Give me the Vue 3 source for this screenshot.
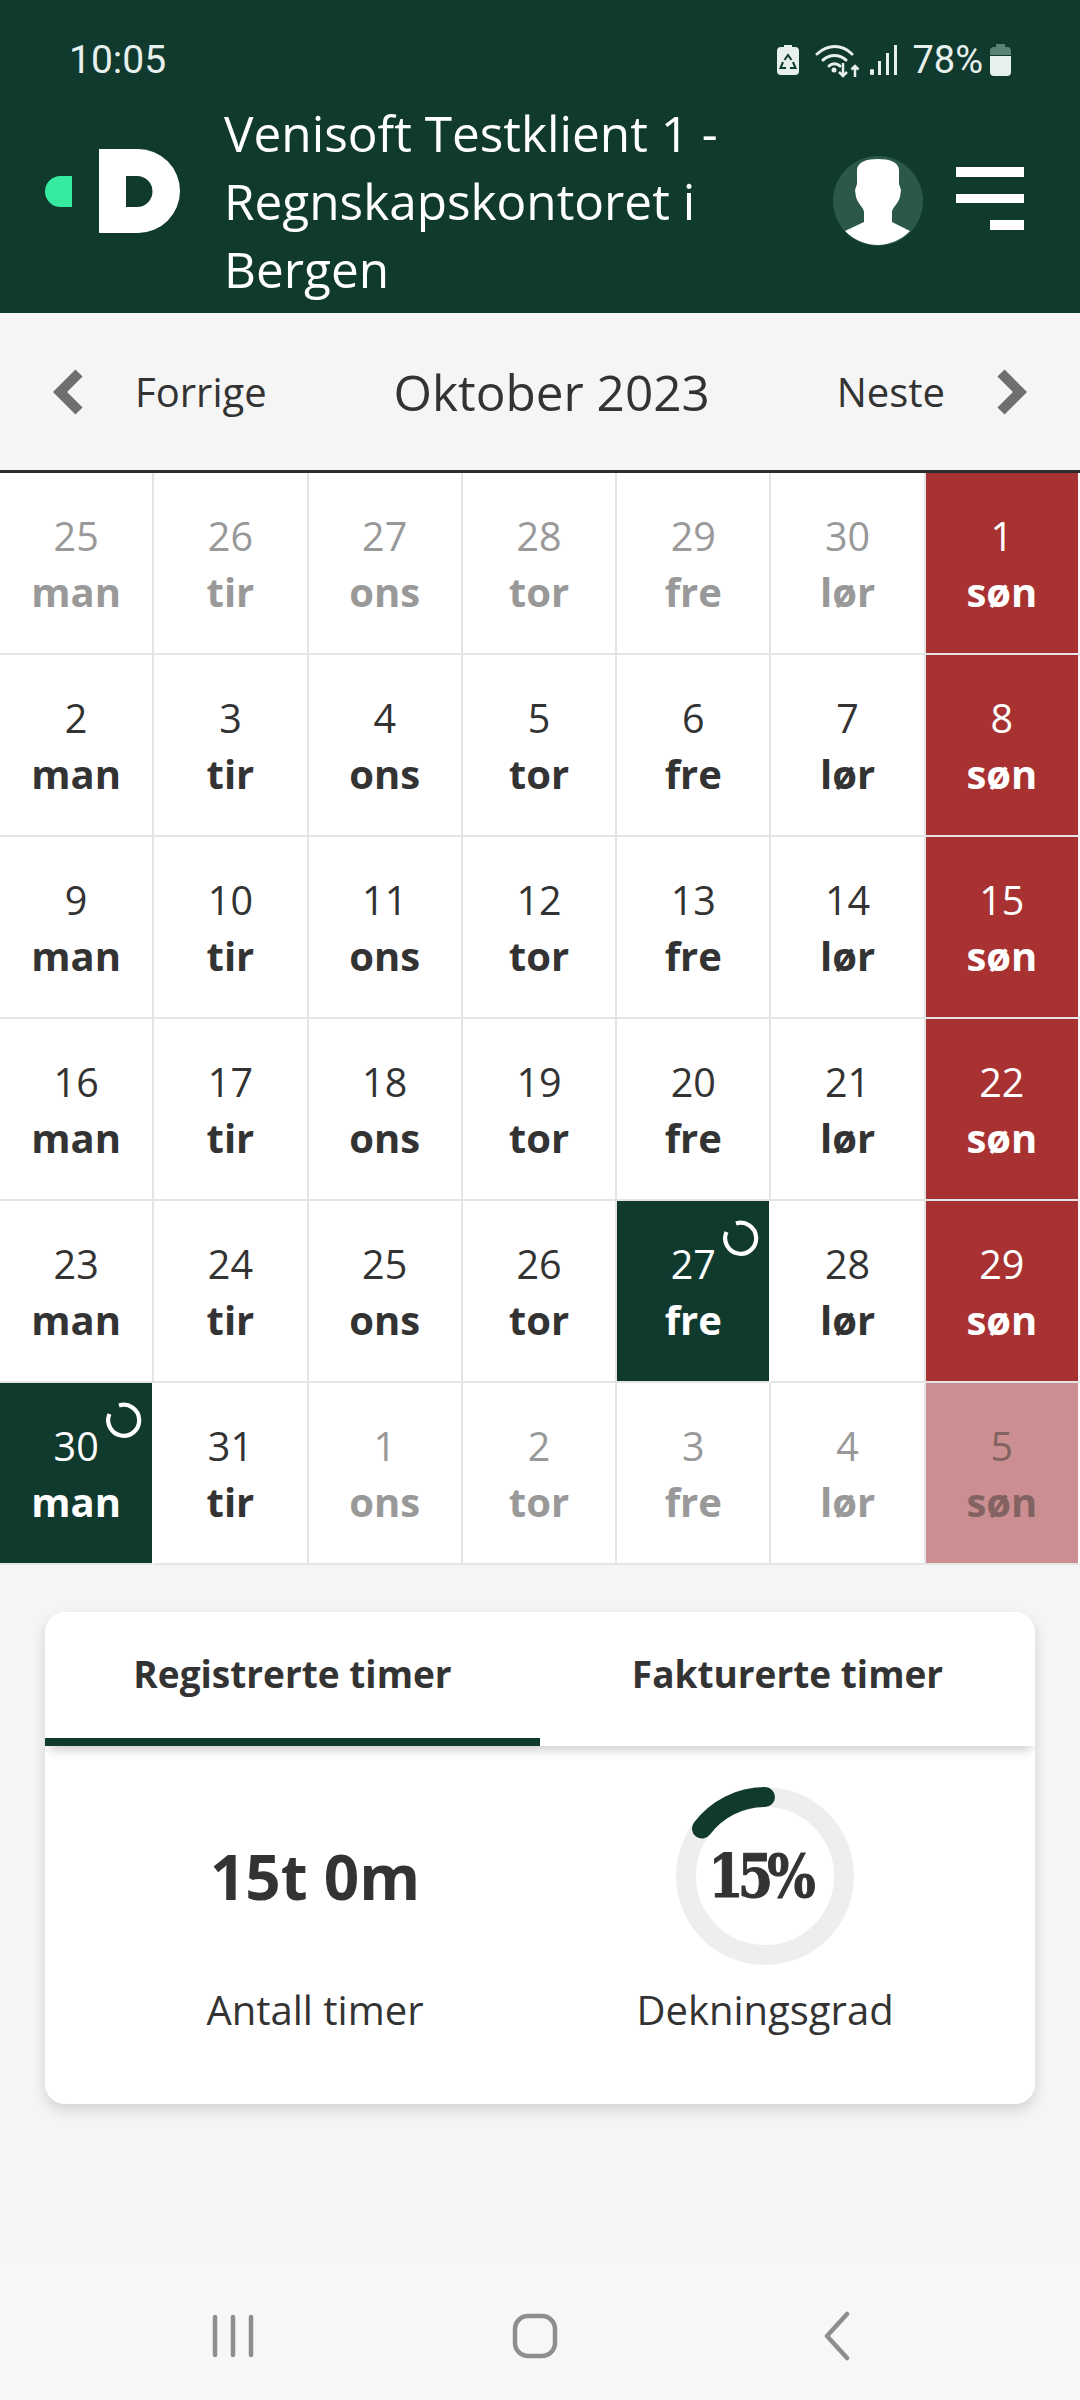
<template>
  <div class="page">
    <header class="top">
      <div class="status">
        <span class="time">10:05</span>
        <div class="status-icons">
          <svg class="saver" width="22" height="30" viewBox="0 0 22 30">
            <path d="M7 0h8v2h3a4 4 0 0 1 4 4v20a4 4 0 0 1-4 4H4a4 4 0 0 1-4-4V6a4 4 0 0 1 4-4h3z" fill="#e8f0ee" />
            <path d="M7.500 15 11 10l3.500 5M16 17l2.500 6H13M9 23H3.500L6 17" fill="none" stroke="#113a2f" stroke-width="2" />
          </svg>
          <svg class="wifi" width="45" height="34" viewBox="0 0 45 34">
            <g fill="none" stroke="#e8f0ee" stroke-width="3" stroke-linecap="round">
              <path d="M2 10C13 0 27 0 37 10" />
              <path d="M8 16c7-6 16-6 23 0" />
              <path d="M14 22c3-3 8-3 11 0" />
            </g>
            <circle cx="19" cy="26" r="2.500" fill="#e8f0ee" />
            <path d="M28 19v13m-4-4 4 4 4-4M40 33V22m-3.500 3.500L40 22l3.500 3.500" fill="none" stroke="#e8f0ee" stroke-width="2.500" />
          </svg>
          <svg class="signal" width="27" height="30" viewBox="0 0 27 30">
            <g fill="#e8f0ee">
              <rect x="0" y="24" width="4" height="6" rx="1.500" />
              <rect x="8" y="16" width="3" height="14" />
              <rect x="16" y="8" width="3" height="22" />
              <rect x="24" y="0" width="3" height="30" />
            </g>
          </svg>
          <span class="pct">78%</span>
          <svg class="battery" width="21" height="32" viewBox="0 0 21 32">
            <path d="M6 0h9v3h2a4 4 0 0 1 4 4v4H0V7a4 4 0 0 1 4-4h2z" fill="#5c8277" />
            <path d="M0 12h21v16a4 4 0 0 1-4 4H4a4 4 0 0 1-4-4z" fill="#e8f0ee" />
          </svg>
        </div>
      </div>
      <div class="bar">
        <svg class="logo" width="135" height="84" viewBox="0 0 135 84">
          <path d="M27 27v31H15.500A15.500 15.500 0 0 1 15.500 27z" fill="#36ea9f" />
          <path fill-rule="evenodd" d="M54 0h39a42 42 0 0 1 0 84H54zM81 27v31h11a15.500 15.500 0 0 0 0-31z" fill="#fff" />
        </svg>
        <div class="title">Venisoft Testklient 1 - Regnskapskontoret i Bergen</div>
        <svg class="avatar" width="90" height="90" viewBox="0 0 90 90">
          <circle cx="45" cy="45" r="45" fill="#2b5849" />
          <path d="M12 75 31 66V56C31 52 25 48 23 41L22 34 24 28V14C24 6 34 3 45 3S66 6 66 14V28L68 34 67 41C65 48 59 52 59 56V66L77 75A45 45 0 0 1 12 75z" fill="#fff" />
        </svg>
        <div class="menu">
          <span></span>
          <span></span>
          <span class="short"></span>
        </div>
      </div>
    </header>

    <nav class="month">
      <svg class="chev" width="30" height="46" viewBox="0 0 30 46"><path d="M26 4 7 23l19 19" fill="none" stroke="#6f6f6f" stroke-width="10" /></svg>
      <span class="prev">Forrige</span>
      <span class="month-name">Oktober 2023</span>
      <span class="next">Neste</span>
      <svg class="chev" width="30" height="46" viewBox="0 0 30 46"><path d="M4 4l19 19L4 42" fill="none" stroke="#6f6f6f" stroke-width="10" /></svg>
    </nav>

    <section class="grid">
      <div v-for="(c, i) in cells" :key="i" class="cell" :class="c.cls">
        <span class="num">{{ c.n }}</span>
        <span class="day">{{ c.d }}</span>
        <svg v-if="c.spin" class="spin" width="36" height="36" viewBox="0 0 36 36">
          <path d="M13 3.500A15.500 15.500 0 1 1 3.500 12" fill="none" stroke="#fff" stroke-width="4.200" />
        </svg>
      </div>
    </section>

    <section class="card">
      <div class="tabs">
        <div class="tab active">Registrerte timer</div>
        <div class="tab">Fakturerte timer</div>
      </div>
      <div class="stats">
        <div class="stat">
          <div class="stat-top"><span class="hours">15t 0m</span></div>
          <div class="label">Antall timer</div>
        </div>
        <div class="stat">
          <div class="stat-top ring">
            <svg width="178" height="178" viewBox="0 0 178 178">
              <circle cx="89" cy="89" r="79" fill="none" stroke="#eeeeee" stroke-width="20" />
              <path d="M89 10A79 79 0 0 0 26 41.500" fill="none" stroke="#113a2f" stroke-width="20" stroke-linecap="round" />
            </svg>
            <span class="ring-val">15%</span>
          </div>
          <div class="label">Dekningsgrad</div>
        </div>
      </div>
    </section>

    <div class="spacer"></div>

    <footer class="sysnav">
      <svg width="42" height="46" viewBox="0 0 42 46"><path d="M3 4v38M21 4v38M39 4v38" stroke="#8e8e8e" stroke-width="4.500" stroke-linecap="round" /></svg>
      <svg class="home" width="46" height="46" viewBox="0 0 46 46"><rect x="3" y="3" width="40" height="40" rx="13" fill="none" stroke="#8e8e8e" stroke-width="4.500" /></svg>
      <svg width="26" height="50" viewBox="0 0 26 50"><path d="M23 3 3 25l20 22" fill="none" stroke="#8e8e8e" stroke-width="4.500" stroke-linecap="round" stroke-linejoin="round" /></svg>
    </footer>
  </div>
</template>

<script setup>
const names = ['man', 'tir', 'ons', 'tor', 'fre', 'lør', 'søn']
const nums = [
  25, 26, 27, 28, 29, 30, 1,
  2, 3, 4, 5, 6, 7, 8,
  9, 10, 11, 12, 13, 14, 15,
  16, 17, 18, 19, 20, 21, 22,
  23, 24, 25, 26, 27, 28, 29,
  30, 31, 1, 2, 3, 4, 5,
]

const cells = nums.map((n, i) => {
  const col = i % 7
  const outside = i < 6 || i > 36
  const today = i === 32 || i === 35
  const cls = []
  if (col === 6) cls.push(outside ? 'sun-faded' : 'sun')
  else if (outside) cls.push('faded')
  if (today) cls.push('today')
  return { n, d: names[col], cls, spin: today }
})
</script>

<style>
body {
  margin: 0;
  background: #f5f5f5;
}
</style>

<style scoped>
.page {
  width: 1080px;
  height: 2400px;
  display: flex;
  flex-direction: column;
  background: #f5f5f5;
  font-family: 'Open Sans', sans-serif;
  color: #333;
  overflow: hidden;
}

.top {
  background: #113a2f;
  height: 313px;
  box-sizing: border-box;
}

.status {
  height: 99px;
  box-sizing: border-box;
  padding: 38px 69px 0 69px;
  display: flex;
  justify-content: space-between;
  color: #e8f0ee;
  font-family: Roboto, sans-serif;
}

.time {
  font-size: 39px;
  line-height: 44px;
}

.status-icons {
  display: flex;
  align-items: center;
  height: 44px;
}

.saver {
  margin-right: 16px;
}

.wifi {
  margin-right: 10px;
  margin-top: 2px;
}

.signal {
  margin-right: 15px;
}

.pct {
  font-size: 38px;
  line-height: 44px;
  margin-right: 7px;
}

.bar {
  display: flex;
  align-items: flex-start;
  padding: 0 56px 0 45px;
}

.logo {
  flex: none;
  margin-top: 50px;
}

.title {
  width: 520px;
  margin-left: 44px;
  font-size: 49.500px;
  line-height: 68px;
  color: #fff;
  flex: none;
}

.avatar {
  flex: none;
  margin: 57px 0 0 auto;
}

.menu {
  flex: none;
  width: 68px;
  margin: 68px 0 0 33px;
  display: flex;
  flex-direction: column;
  align-items: flex-end;
  gap: 17px;
}

.menu span {
  display: block;
  width: 68px;
  height: 9.500px;
  background: #fff;
}

.menu .short {
  width: 34px;
}

.month {
  height: 157px;
  border-bottom: 3px solid #2d2d2d;
  display: flex;
  align-items: center;
  padding: 0 53px;
}

.prev {
  font-size: 40px;
  margin-left: 52px;
}

.month-name {
  flex: 1;
  text-align: center;
  font-size: 49.500px;
}

.next {
  font-size: 40px;
  margin-right: 52px;
}

.grid {
  display: grid;
  grid-template-columns: repeat(7, 1fr);
  grid-auto-rows: 182px;
  background: #fff;
}

.cell {
  position: relative;
  box-sizing: border-box;
  display: flex;
  flex-direction: column;
  align-items: center;
  justify-content: center;
  padding-top: 2px;
  border-right: 2px solid #e4e4e4;
  border-bottom: 2px solid #e4e4e4;
  background: #fff;
  color: #333;
}

.num {
  font-size: 39.500px;
  line-height: 55px;
}

.day {
  font-size: 40px;
  font-weight: 700;
  line-height: 55px;
}

.faded {
  color: #999;
}

.sun {
  background: #a83232;
  color: #fff;
  border-right-color: #fff;
}

.sun-faded {
  background: #cc8f91;
  color: #836262;
  border-right-color: #fff;
}

.today {
  background: #113a2f;
  color: #fff;
  border-right-color: #fff;
}

.spin {
  position: absolute;
  top: 19px;
  right: 10px;
}

.card {
  margin: 47px 45px 0;
  height: 492px;
  background: #fff;
  border-radius: 20px;
  box-shadow: 0 6px 14px rgba(0, 0, 0, 0.14);
  overflow: hidden;
}

.tabs {
  display: flex;
  height: 134px;
  box-shadow: 0 8px 10px -4px rgba(0, 0, 0, 0.2);
}

.tab {
  flex: 1;
  box-sizing: border-box;
  text-align: center;
  font-size: 37px;
  font-weight: 700;
  padding-top: 35px;
  line-height: 54px;
}

.tab.active {
  border-bottom: 8px solid #113a2f;
}

.stats {
  display: flex;
  padding: 41px 45px 0;
}

.stat {
  flex: 1;
  display: flex;
  flex-direction: column;
  align-items: center;
}

.stat-top {
  height: 178px;
  display: flex;
  align-items: center;
  justify-content: center;
}

.hours {
  font-size: 62px;
  font-weight: 700;
}

.ring {
  position: relative;
  width: 178px;
}

.ring svg {
  display: block;
}

.ring-val {
  position: absolute;
  left: -26px;
  right: -14px;
  top: 50px;
  text-align: center;
  font-family: 'DejaVu Serif', serif;
  font-weight: 700;
  font-size: 60px;
  line-height: 78px;
  letter-spacing: -7px;
  -webkit-text-stroke: 1px #333;
  transform: scaleX(0.85);
}

.label {
  margin-top: 18px;
  font-size: 40px;
  line-height: 54px;
}

.spacer {
  flex: 1;
}

.sysnav {
  height: 136px;
  box-sizing: border-box;
  background: #f7f7f7;
  display: flex;
  align-items: center;
  padding: 8px 230px 0 212px;
  justify-content: space-between;
}

.home {
  margin-left: -8px;
}
</style>
